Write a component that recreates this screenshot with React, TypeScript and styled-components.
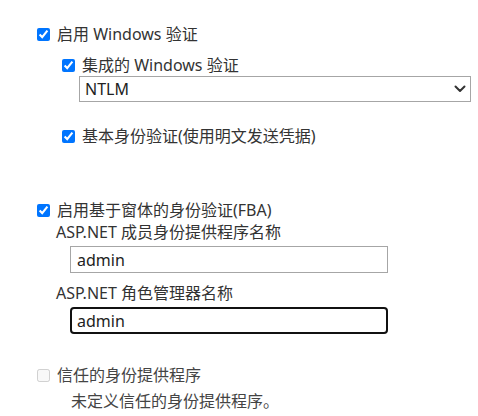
import React, { useState } from "react";
import styled, { createGlobalStyle } from "styled-components";

const GlobalStyle = createGlobalStyle`
  html, body {
    margin: 0;
    padding: 0;
    background: #ffffff;
  }
  body {
    font-family: "Noto Sans", "Noto Sans CJK SC", sans-serif;
    font-size: 16px;
    color: #333333;
  }
`;

const App: React.FC = () => {
  const [winAuth, setWinAuth] = useState(true);
  const [integrated, setIntegrated] = useState(true);
  const [basic, setBasic] = useState(true);
  const [fba, setFba] = useState(true);
  const [provider, setProvider] = useState("admin");
  const [role, setRole] = useState("admin");
  const [mode, setMode] = useState("NTLM");

  return (
    <>
      <GlobalStyle />
      <Page>
        <Section>
          <CheckRow>
            <Check
              type="checkbox"
              checked={winAuth}
              onChange={(e) => setWinAuth(e.target.checked)}
            />
            启用 Windows 验证
          </CheckRow>
          <Nested>
            <CheckRow $top={9}>
              <Check
                type="checkbox"
                checked={integrated}
                onChange={(e) => setIntegrated(e.target.checked)}
              />
              集成的 Windows 验证
            </CheckRow>
            <SelectWrap>
              <Select value={mode} onChange={(e) => setMode(e.target.value)}>
                <option>NTLM</option>
                <option>Negotiate (Kerberos)</option>
              </Select>
              <Chevron width="12" height="8" viewBox="0 0 12 8">
                <path
                  d="M1.5 1.5 L6 6 L10.5 1.5"
                  fill="none"
                  stroke="#333"
                  strokeWidth="2"
                  strokeLinecap="round"
                  strokeLinejoin="round"
                />
              </Chevron>
            </SelectWrap>
            <CheckRow $top={23}>
              <Check
                type="checkbox"
                checked={basic}
                onChange={(e) => setBasic(e.target.checked)}
              />
              基本身份验证(使用明文发送凭据)
            </CheckRow>
          </Nested>
        </Section>

        <Section $top={52}>
          <CheckRow>
            <Check
              type="checkbox"
              checked={fba}
              onChange={(e) => setFba(e.target.checked)}
            />
            启用基于窗体的身份验证(FBA)
          </CheckRow>
          <FieldBlock>
            <FieldLabel>ASP.NET 成员身份提供程序名称</FieldLabel>
            <TextInput
              value={provider}
              onChange={(e) => setProvider(e.target.value)}
            />
            <FieldLabel $top={9}>ASP.NET 角色管理器名称</FieldLabel>
            <TextInput
              $active
              value={role}
              onChange={(e) => setRole(e.target.value)}
            />
          </FieldBlock>
        </Section>

        <Section $top={30}>
          <CheckRow $muted>
            <Check type="checkbox" disabled />
            信任的身份提供程序
          </CheckRow>
          <Note>未定义信任的身份提供程序。</Note>
        </Section>
      </Page>
    </>
  );
};

export default App;

const Page = styled.div`
  display: flex;
  flex-direction: column;
  padding: 23px 0 0 33px;
  width: 478px;
  box-sizing: border-box;
`;

const Section = styled.div<{ $top?: number }>`
  display: flex;
  flex-direction: column;
  margin-top: ${(p) => p.$top ?? 0}px;
`;

const Nested = styled.div`
  display: flex;
  flex-direction: column;
  margin-left: 25px;
`;

const CheckRow = styled.label<{ $top?: number; $muted?: boolean }>`
  display: flex;
  align-items: center;
  height: 22px;
  line-height: 22px;
  margin-top: ${(p) => p.$top ?? 0}px;
  color: ${(p) => (p.$muted ? "#444444" : "#333333")};
  white-space: nowrap;
`;

const Check = styled.input`
  width: 13px;
  height: 13px;
  margin: 0 7px 0 4px;
  accent-color: #0075ff;
`;

const SelectWrap = styled.div`
  position: relative;
  margin: 0 0 0 21px;
  width: 392px;
`;

const Select = styled.select`
  appearance: none;
  width: 100%;
  height: 26px;
  box-sizing: border-box;
  border: 1px solid #a6a6a6;
  border-radius: 0;
  background: #ffffff;
  padding: 0 0 0 5px;
  font-family: "Noto Sans", "Noto Sans CJK SC", sans-serif;
  font-size: 16px;
  color: #222222;
  outline: none;
`;

const Chevron = styled.svg`
  position: absolute;
  right: 5px;
  top: 9px;
  pointer-events: none;
`;

const FieldBlock = styled.div`
  display: flex;
  flex-direction: column;
  margin-left: 23px;
`;

const FieldLabel = styled.div<{ $top?: number }>`
  height: 22px;
  line-height: 22px;
  margin-top: ${(p) => p.$top ?? 0}px;
  white-space: nowrap;
`;

const TextInput = styled.input<{ $active?: boolean }>`
  margin: 3px 0 0 14px;
  width: 318px;
  height: 27px;
  box-sizing: border-box;
  padding: 0 0 0 ${(p) => (p.$active ? 5 : 6)}px;
  border: ${(p) => (p.$active ? "2px solid #111111" : "1px solid #a6a6a6")};
  border-radius: ${(p) => (p.$active ? 4 : 0)}px;
  font-family: "Noto Sans", "Noto Sans CJK SC", sans-serif;
  font-size: 16px;
  color: #222222;
  outline: none;
`;

const Note = styled.div`
  margin: 4px 0 0 38px;
  height: 22px;
  line-height: 22px;
  color: #444444;
  white-space: nowrap;
`;
